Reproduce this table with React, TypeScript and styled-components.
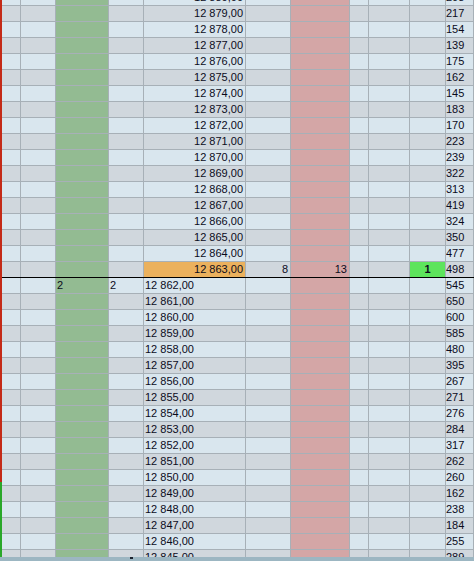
import React from "react";
import styled, { createGlobalStyle } from "styled-components";

const Global = createGlobalStyle`
  html, body {
    margin: 0;
    padding: 0;
    background: #9cb6c2;
    overflow: hidden;
  }
  body {
    font-family: "Liberation Sans", Arial, sans-serif;
  }
`;

const GRID = "#a7b0b7";

const Screen = styled.div`
  width: 474px;
  height: 561px;
  display: flex;
  flex-direction: column;
  overflow: hidden;
`;

const Main = styled.div`
  display: flex;
  height: 557px;
  flex: none;
  overflow: hidden;
`;

const SideBar = styled.div`
  width: 2px;
  flex: none;
  display: flex;
  flex-direction: column;
`;

const BarPart = styled.div<{ $color: string; $height?: number }>`
  background: ${(p) => p.$color};
  ${(p) => (p.$height ? `height: ${p.$height}px; flex: none;` : "flex: 1;")}
`;

const Ladder = styled.div`
  flex: 1;
  min-width: 0;
  display: flex;
  flex-direction: column;
  margin-top: -10px;
`;

const Row = styled.div<{ $alt: boolean; $split?: boolean }>`
  display: grid;
  grid-template-columns: 19px 35px 53px 35px 102px 45px 59px 19px 41px 36px 1fr;
  height: 16px;
  flex: none;
  box-sizing: border-box;
  background: ${(p) => (p.$alt ? "#d0d7dd" : "#d9e6ee")};
  border-bottom: 1px solid ${(p) => (p.$split ? "#000" : GRID)};
`;

type Tone = "bid" | "ask" | "last" | "hit" | undefined;

const toneColor = (t: Tone) =>
  t === "bid"
    ? "#93bb92"
    : t === "ask"
    ? "#d4a6a6"
    : t === "last"
    ? "#ebb15d"
    : t === "hit"
    ? "#5de45c"
    : "transparent";

const Cell = styled.div<{ $tone?: Tone; $align?: "left" | "right" | "center"; $bold?: boolean; $pad?: number }>`
  box-sizing: border-box;
  border-right: 1px solid ${GRID};
  background: ${(p) => toneColor(p.$tone)};
  font-size: 11px;
  line-height: 15px;
  color: #0b0b1c;
  font-weight: ${(p) => (p.$bold ? 700 : 400)};
  text-align: ${(p) => p.$align || "left"};
  padding: 0 ${(p) => p.$pad ?? 1}px;
  white-space: nowrap;
  overflow: hidden;
`;

const Strip = styled.div`
  height: 4px;
  flex: none;
  background: #9cb6c2;
  display: flex;
  align-items: flex-start;
`;

const Tick = styled.div`
  margin-left: 130px;
  width: 3px;
  height: 2px;
  background: #1c2430;
`;

const volumes = [
  208, 217, 154, 139, 175, 162, 145, 183, 170, 223, 239, 322, 313, 419, 324, 350, 477, 498,
  545, 650, 600, 585, 480, 395, 267, 271, 276, 284, 317, 262, 260, 162, 238, 184, 255, 289,
];

const fmt = (n: number) => `12 ${String(n - 12000).padStart(3, "0")},00`;

const LAST = 12863;

export default function App() {
  const rows = volumes.map((vol, i) => {
    const price = 12880 - i;
    const isLast = price === LAST;
    const below = price < LAST;
    const first = price === LAST - 1;
    return (
      <Row key={price} $alt={i % 2 === 1} $split={isLast}>
        <Cell />
        <Cell />
        <Cell $tone="bid">{first ? "2" : ""}</Cell>
        <Cell>{first ? "2" : ""}</Cell>
        <Cell $tone={isLast ? "last" : undefined} $align={below ? "left" : "right"} $pad={below ? 1 : 2}>
          {fmt(price)}
        </Cell>
        <Cell $align="right" $pad={2}>
          {isLast ? "8" : ""}
        </Cell>
        <Cell $tone="ask" $align="right" $pad={2}>
          {isLast ? "13" : ""}
        </Cell>
        <Cell />
        <Cell />
        <Cell $tone={isLast ? "hit" : undefined} $align="center" $bold>
          {isLast ? "1" : ""}
        </Cell>
        <Cell $pad={0}>{vol}</Cell>
      </Row>
    );
  });

  return (
    <>
      <Global />
      <Screen>
        <Main>
          <SideBar>
            <BarPart $color="#c42a17" $height={482} />
            <BarPart $color="#2aa82a" />
          </SideBar>
          <Ladder>{rows}</Ladder>
        </Main>
        <Strip>
          <Tick />
        </Strip>
      </Screen>
    </>
  );
}
